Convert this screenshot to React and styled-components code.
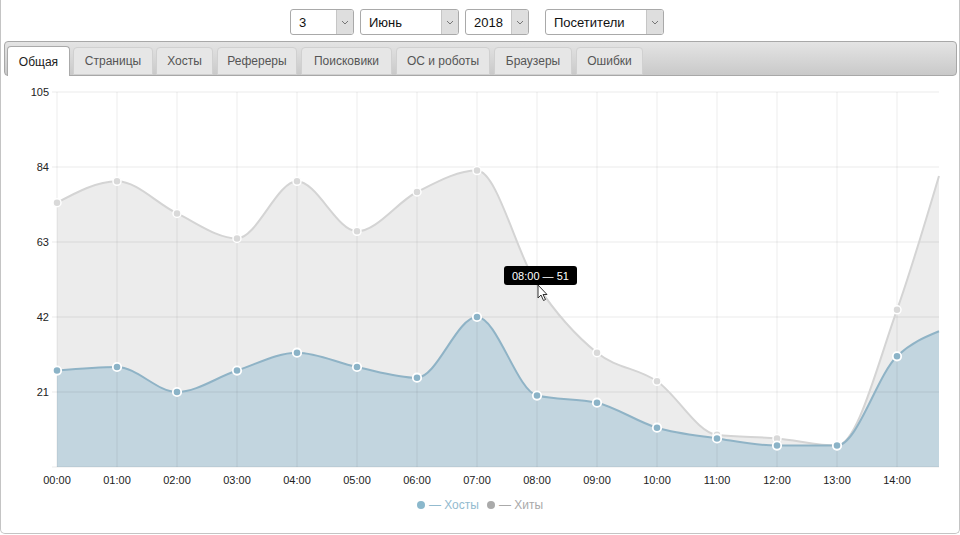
import React from 'react';
import styled, { createGlobalStyle } from 'styled-components';

const GlobalStyle = createGlobalStyle`
  html, body {
    margin: 0;
    padding: 0;
    background: #fff;
  }
  body {
    font-family: 'Liberation Sans', Arial, sans-serif;
    color: #222;
  }
`;

const Frame = styled.div`
  box-sizing: border-box;
  width: 960px;
  height: 534px;
  border: 1px solid #c4c4c4;
  border-top: none;
  border-radius: 0 0 5px 5px;
  overflow: hidden;
  position: relative;
`;

const Toolbar = styled.div`
  display: flex;
  justify-content: center;
  gap: 6px;
  padding: 9px 6px 0 0;
`;

const SelectBox = styled.div`
  box-sizing: border-box;
  display: flex;
  align-items: stretch;
  width: ${({ w }) => w}px;
  height: 26px;
  margin-left: ${({ gapLeft }) => gapLeft || 0}px;
  border: 1px solid #a9a9a9;
  border-radius: 3px;
  background: #fff;
  overflow: hidden;
`;

const SelectValue = styled.span`
  flex: 1;
  display: flex;
  align-items: center;
  padding-left: 8px;
  font-size: 13px;
  color: #111;
`;

const SelectArrow = styled.span`
  width: 16px;
  border-left: 1px solid #c6c6c6;
  background: #dedede;
  display: flex;
  align-items: center;
  justify-content: center;
`;

const TabBar = styled.div`
  box-sizing: border-box;
  display: flex;
  align-items: flex-end;
  gap: 3px;
  height: 35px;
  margin: 6px 2px 0 3px;
  padding: 4px 2px 0 2px;
  border: 1px solid #a8a8a8;
  border-radius: 4px;
  background: linear-gradient(#e4e4e4, #c9c9c9);
`;

const Tab = styled.div`
  box-sizing: border-box;
  width: ${({ w }) => w}px;
  height: ${({ active }) => (active ? 30 : 28)}px;
  margin-bottom: ${({ active }) => (active ? -1 : 0)}px;
  margin-right: ${({ extra }) => extra || 0}px;
  display: flex;
  align-items: center;
  justify-content: center;
  font-size: 12px;
  color: ${({ active }) => (active ? '#212121' : '#555')};
  background: ${({ active }) => (active ? '#fff' : '#e6e6e6')};
  border: 1px solid ${({ active }) => (active ? '#aaa' : '#d0d0d0')};
  border-bottom: ${({ active }) => (active ? 'none' : '1px solid #d0d0d0')};
  border-radius: 4px 4px 0 0;
  white-space: nowrap;
`;

const ChartWrap = styled.div`
  position: relative;
  margin-top: 4px;
  height: 415px;
`;

const Tooltip = styled.div`
  position: absolute;
  left: 503px;
  top: 186px;
  height: 19px;
  padding: 0 8px;
  border-radius: 3px;
  background: #000;
  color: #fff;
  font-size: 11px;
  display: flex;
  align-items: center;
  white-space: nowrap;
`;

const Cursor = styled.svg`
  position: absolute;
  left: 536px;
  top: 204px;
`;

const Legend = styled.div`
  display: flex;
  justify-content: center;
  align-items: center;
  gap: 8px;
  margin-top: 2px;
  height: 16px;
  font-size: 12px;
`;

const LegendItem = styled.span`
  display: flex;
  align-items: center;
  gap: 4px;
  color: ${({ color }) => color};
`;

const Dot = styled.span`
  width: 8px;
  height: 8px;
  border-radius: 50%;
  background: ${({ color }) => color};
`;

const selects = [
  { label: '3', w: 64 },
  { label: 'Июнь', w: 99 },
  { label: '2018', w: 64 },
  { label: 'Посетители', w: 119, gapLeft: 10 },
];

const tabs = [
  { label: 'Общая', w: 63, active: true },
  { label: 'Страницы', w: 80 },
  { label: 'Хосты', w: 57, extra: 1 },
  { label: 'Рефереры', w: 80, extra: 1 },
  { label: 'Поисковики', w: 91, extra: 1 },
  { label: 'ОС и роботы', w: 94, extra: 1 },
  { label: 'Браузеры', w: 78, extra: 1 },
  { label: 'Ошибки', w: 67 },
];

const hits = [74, 80, 71, 64, 80, 66, 77, 83, 51, 32, 24, 9, 8, 6, 44, 81.5];
const hosts = [27, 28, 21, 27, 32, 28, 25, 42, 20, 18, 11, 8, 6, 6, 31, 38];

const X0 = 57;
const STEP = 60;
const Y0 = 467;
const SCALE = 375 / 105;
const XEND = 939;

const px = (i) => (i === hits.length - 1 ? XEND : X0 + i * STEP);
const py = (v) => Y0 - v * SCALE;

const sign = (v) => (v < 0 ? -1 : 1);

// monotone cubic through the points (like d3 monotoneX)
function smoothPath(values) {
  const pts = values.map((v, i) => [px(i), py(v)]);
  const n = pts.length;
  const h = [];
  const s = [];
  for (let i = 0; i < n - 1; i++) {
    h[i] = pts[i + 1][0] - pts[i][0];
    s[i] = (pts[i + 1][1] - pts[i][1]) / h[i];
  }
  const t = [];
  for (let i = 1; i < n - 1; i++) {
    const p = (s[i - 1] * h[i] + s[i] * h[i - 1]) / (h[i - 1] + h[i]);
    t[i] = (sign(s[i - 1]) + sign(s[i])) * Math.min(Math.abs(s[i - 1]), Math.abs(s[i]), 0.5 * Math.abs(p)) || 0;
  }
  t[0] = (3 * s[0] - t[1]) / 2;
  t[n - 1] = (3 * s[n - 2] - t[n - 2]) / 2;
  let d = `M${pts[0][0]},${pts[0][1]}`;
  for (let i = 0; i < n - 1; i++) {
    const dx = h[i] / 3;
    d += ` C${pts[i][0] + dx},${pts[i][1] + dx * t[i]} ${pts[i + 1][0] - dx},${pts[i + 1][1] - dx * t[i + 1]} ${pts[i + 1][0]},${pts[i + 1][1]}`;
  }
  return d;
}

const areaPath = (values) => `${smoothPath(values)} L${XEND},${Y0} L${X0},${Y0} Z`;

const hours = Array.from({ length: 15 }, (_, i) => `${String(i).padStart(2, '0')}:00`);
const levels = [0, 21, 42, 63, 84, 105];

function Chart() {
  return (
    <svg width="958" height="415" style={{ display: 'block' }}>
      <g transform="translate(-1,-80)">
        <path d={areaPath(hits)} fill="#ececec" />
        <path d={areaPath(hosts)} fill="#c2d5df" />
        {levels.map((l) => (
          <line key={l} x1={52} x2={XEND} y1={py(l)} y2={py(l)} stroke="#000" strokeOpacity="0.08" />
        ))}
        {hours.map((h, i) => (
          <line key={h} x1={px(i)} x2={px(i)} y1={92} y2={Y0} stroke="#000" strokeOpacity="0.07" />
        ))}
        <path d={smoothPath(hits)} fill="none" stroke="#d4d4d4" strokeWidth="2" />
        <path d={smoothPath(hosts)} fill="none" stroke="#8fb3c6" strokeWidth="2" />
        {hits.slice(0, 15).map((v, i) =>
          i === 8 ? null : (
            <circle key={i} cx={px(i)} cy={py(v)} r="4" fill="#d9d9d9" stroke="#fff" strokeWidth="1.5" />
          )
        )}
        {hosts.slice(0, 15).map((v, i) => (
          <circle key={i} cx={px(i)} cy={py(v)} r="4.2" fill="#8bb3c7" stroke="#fff" strokeWidth="1.8" />
        ))}
        {levels.slice(1).map((l) => (
          <text key={l} x={49} y={py(l) + 4} textAnchor="end" fontSize="11" fill="#222">
            {l}
          </text>
        ))}
        {hours.map((h, i) => (
          <text key={h} x={px(i)} y={484} textAnchor="middle" fontSize="11" fill="#222">
            {h}
          </text>
        ))}
      </g>
    </svg>
  );
}

export default function App() {
  return (
    <Frame>
      <GlobalStyle />
      <Toolbar>
        {selects.map((s) => (
          <SelectBox key={s.label} w={s.w} gapLeft={s.gapLeft}>
            <SelectValue>{s.label}</SelectValue>
            <SelectArrow>
              <svg width="8" height="5" viewBox="0 0 8 5">
                <path d="M1 1 L4 4 L7 1" fill="none" stroke="#777" strokeWidth="1" />
              </svg>
            </SelectArrow>
          </SelectBox>
        ))}
      </Toolbar>
      <TabBar>
        {tabs.map((t) => (
          <Tab key={t.label} active={t.active} w={t.w} extra={t.extra}>
            {t.label}
          </Tab>
        ))}
      </TabBar>
      <ChartWrap>
        <Chart />
        <Tooltip>08:00 — 51</Tooltip>
        <Cursor width="12" height="18" viewBox="0 0 12 18">
          <path d="M1 1 L1 14 L4 11 L6.5 16.5 L8.5 15.5 L6 10.5 L10 10.5 Z" fill="#fff" stroke="#333" strokeWidth="1" />
        </Cursor>
      </ChartWrap>
      <Legend>
        <LegendItem color="#93bbcf">
          <Dot color="#8bb8cc" />— Хосты
        </LegendItem>
        <LegendItem color="#aaa">
          <Dot color="#aaa" />— Хиты
        </LegendItem>
      </Legend>
    </Frame>
  );
}
